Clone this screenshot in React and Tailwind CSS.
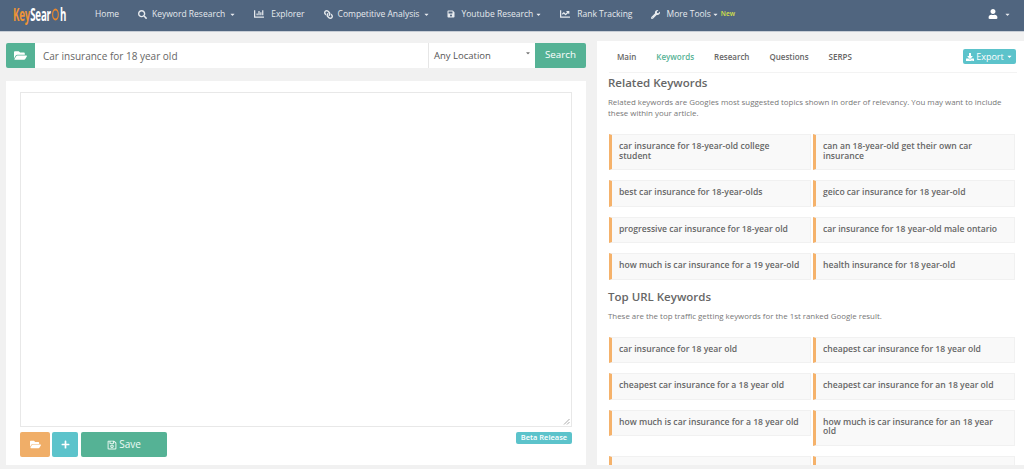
import { FaFolderOpen, FaSearch, FaChartBar, FaLink, FaSave, FaRegSave, FaChartLine, FaWrench, FaUser, FaPlus, FaDownload, FaCaretDown } from 'react-icons/fa';

const NAV_ITEMS = [
  { label: 'Home', ml: 'ml-0' },
  { label: 'Keyword Research', icon: FaSearch, iconClass: 'w-[9px] h-[9px] mr-[5px]', caretClass: 'ml-[4px]', ml: 'ml-[19px]' },
  { label: 'Explorer', icon: FaChartBar, iconClass: 'w-[10px] h-[10px] mr-[7px]', ml: 'ml-[18px]' },
  { label: 'Competitive Analysis', icon: FaLink, iconClass: 'w-[9px] h-[9px] mr-[5px] -scale-x-100', caretClass: 'ml-[4px]', ml: 'ml-[19px]' },
  { label: 'Youtube Research', icon: FaSave, iconClass: 'w-[8px] h-[8px] mr-[6px]', caretClass: 'ml-[2px]', ml: 'ml-[17px]' },
  { label: 'Rank Tracking', icon: FaChartLine, iconClass: 'w-[10px] h-[10px] mr-[7px]', ml: 'ml-[18px]' },
  { label: 'More Tools', icon: FaWrench, iconClass: 'w-[9px] h-[9px] mr-[6px]', caretClass: 'ml-[1px]', ml: 'ml-[19px]' },
];

const TABS = ['Main', 'Keywords', 'Research', 'Questions', 'SERPS'];

const RELATED = [
  'car insurance for 18-year-old college student',
  'can an 18-year-old get their own car insurance',
  'best car insurance for 18-year-olds',
  'geico car insurance for 18 year-old',
  'progressive car insurance for 18-year old',
  'car insurance for 18 year-old male ontario',
  'how much is car insurance for a 19 year-old',
  'health insurance for 18 year-old',
];

const TOP_URL = [
  'car insurance for 18 year old',
  'cheapest car insurance for 18 year old',
  'cheapest car insurance for a 18 year old',
  'cheapest car insurance for an 18 year old',
  'how much is car insurance for a 18 year old',
  'how much is car insurance for an 18 year old',
  '',
  '',
];

function Logo() {
  return (
    <div className="flex items-center w-[56px] h-[16px] font-bold text-[17px] leading-none overflow-visible">
      <span className="origin-left scale-x-[0.57] flex items-center whitespace-nowrap tracking-[-0.3px]">
        <span className="text-[#ee9436]">Key</span>
        <span className="text-white">Sear</span>
        <svg width="15" height="13" viewBox="0 0 15 13" className="ml-[1px]">
          <circle cx="7.5" cy="6.5" r="5" fill="none" stroke="#e8872e" strokeWidth="2" />
        </svg>
        <span className="text-white">h</span>
      </span>
    </div>
  );
}

function Nav() {
  return (
    <nav className="h-[32px] bg-[#50657f] border-b border-[#c8ced6] flex items-center pl-[13px] pr-[13px] pb-[3px] text-[8.5px] text-[#e6eaee]">
      <Logo />
      <div className="flex items-center ml-[26px]">
        {NAV_ITEMS.map((item) => {
          const Icon = item.icon;
          return (
            <div key={item.label} className={`flex items-center whitespace-nowrap ${item.ml}`}>
              {Icon && <Icon className={`shrink-0 ${item.iconClass}`} />}
              <span>{item.label}</span>
              {item.caretClass && <FaCaretDown className={`w-[7px] h-[7px] ${item.caretClass}`} />}
            </div>
          );
        })}
        <span className="ml-[2px] text-[6.5px] font-semibold text-[#d6e04a]">New</span>
      </div>
      <div className="ml-auto flex items-center gap-[6px]">
        <FaUser className="w-[10px] h-[10px] text-white" />
        <FaCaretDown className="w-[7px] h-[7px]" />
      </div>
    </nav>
  );
}

function SearchBar() {
  return (
    <div className="flex h-[25px] mt-[11px] text-[#555]">
      <div className="w-[29px] bg-[#55b295] rounded-l-[2px] flex items-center justify-center">
        <FaFolderOpen className="w-[13px] h-[13px] text-white" />
      </div>
      <div className="flex-1 bg-white flex items-center pl-[8px] pt-[1px] text-[10px] text-[#666]">Car insurance for 18 year old</div>
      <div className="w-[107px] bg-white border-l border-[#e6e6e6] flex items-center justify-between pl-[5px] pr-[4px] pt-[1px] text-[9.5px] text-[#555]">
        <span>Any Location</span>
        <FaCaretDown className="w-[6px] h-[6px] text-[#777] -mt-[6px]" />
      </div>
      <div className="w-[51px] bg-[#55b295] rounded-r-[2px] flex items-center justify-center text-[9.8px] text-white">Search</div>
    </div>
  );
}

function EditorCard() {
  return (
    <div className="mt-[13px] bg-white h-[384px] pt-[11px] px-[14px]">
      <div className="relative h-[335px] border border-[#e8e8e8]">
        <svg width="7" height="7" viewBox="0 0 7 7" className="absolute right-[1px] bottom-[1px]">
          <path d="M1 6.5L6.5 1M4 6.5L6.5 4" stroke="#888" strokeWidth="0.7" fill="none" />
        </svg>
      </div>
      <div className="flex items-start mt-[5px]">
        <div className="w-[30px] h-[25px] bg-[#f0ae68] rounded-[2px] flex items-center justify-center">
          <FaFolderOpen className="w-[11px] h-[11px] text-white" />
        </div>
        <div className="w-[26px] h-[25px] ml-[2px] bg-[#5cc3cb] rounded-[2px] flex items-center justify-center">
          <FaPlus className="w-[9px] h-[9px] text-white" />
        </div>
        <div className="w-[86px] h-[25px] ml-[3px] bg-[#55b295] rounded-[2px] flex items-center justify-center gap-[2px] text-[10px] text-[#eefaf5]">
          <FaRegSave className="w-[10px] h-[10px]" />
          <span>Save</span>
        </div>
        <div className="ml-auto h-[12px] w-[56px] bg-[#5cc3cb] rounded-[2px] flex items-center justify-center text-[7.5px] font-semibold text-white whitespace-nowrap">Beta Release</div>
      </div>
    </div>
  );
}

function KeywordGrid({ items }) {
  return (
    <div className="grid grid-cols-[202px_202px] gap-x-[2px] gap-y-[10px] items-start mt-[15px]">
      {items.map((kw, i) => (
        <div
          key={i}
          className="min-h-[26.5px] bg-[#f9f9f9] border border-[#f1f1f1] border-l-[3px] border-l-[#f5b26b] pl-[7px] pr-[10px] pt-[7px] pb-[8px] text-[8.6px] leading-[9.5px] font-semibold text-[#666]"
        >
          {kw}
        </div>
      ))}
    </div>
  );
}

function ResultsPanel() {
  return (
    <section className="w-[427px] mt-[9px] h-[424px] overflow-hidden bg-white pl-[12px] pr-[8px]">
      <div className="flex items-start h-[31px]">
        <div className="flex mt-[10px] ml-[8px] gap-[20px] text-[8px] font-semibold text-[#666]">
          {TABS.map((tab) => (
            <span key={tab} className={tab === 'Keywords' ? 'text-[#55b295]' : ''}>{tab}</span>
          ))}
        </div>
        <div className="ml-auto mt-[8px] w-[53px] h-[15px] bg-[#5cc3cb] rounded-[2px] flex items-center justify-center gap-[2px] text-[9px] text-white">
          <FaDownload className="w-[8px] h-[8px]" />
          <span>Export</span>
          <FaCaretDown className="w-[7px] h-[7px]" />
        </div>
      </div>
      <div className="border-t border-[#f3f3f3] -mr-[1px]" />
      <div className="-ml-[1px]">
        <h2 className="mt-[1px] text-[11.5px] leading-[17px] font-semibold text-[#666]">Related Keywords</h2>
        <p className="mt-[6px] text-[7.9px] leading-[11px] text-[#777]">
          Related keywords are Googles most suggested topics shown in order of relevancy. You may want to include these within your article.
        </p>
      </div>
      <KeywordGrid items={RELATED} />
      <div className="-ml-[1px]">
        <h2 className="mt-[8px] text-[11.5px] leading-[17px] font-semibold text-[#666]">Top URL Keywords</h2>
        <p className="mt-[6px] text-[7.9px] leading-[11px] text-[#777]">
          These are the top traffic getting keywords for the 1st ranked Google result.
        </p>
      </div>
      <KeywordGrid items={TOP_URL} />
    </section>
  );
}

export default function App() {
  return (
    <div className="w-[1024px] h-[469px] overflow-hidden bg-[#f1f1f1] font-['Open_Sans',sans-serif]">
      <Nav />
      <div className="flex pl-[6px]">
        <div className="w-[580px] mr-[11px]">
          <SearchBar />
          <EditorCard />
        </div>
        <ResultsPanel />
      </div>
    </div>
  );
}
